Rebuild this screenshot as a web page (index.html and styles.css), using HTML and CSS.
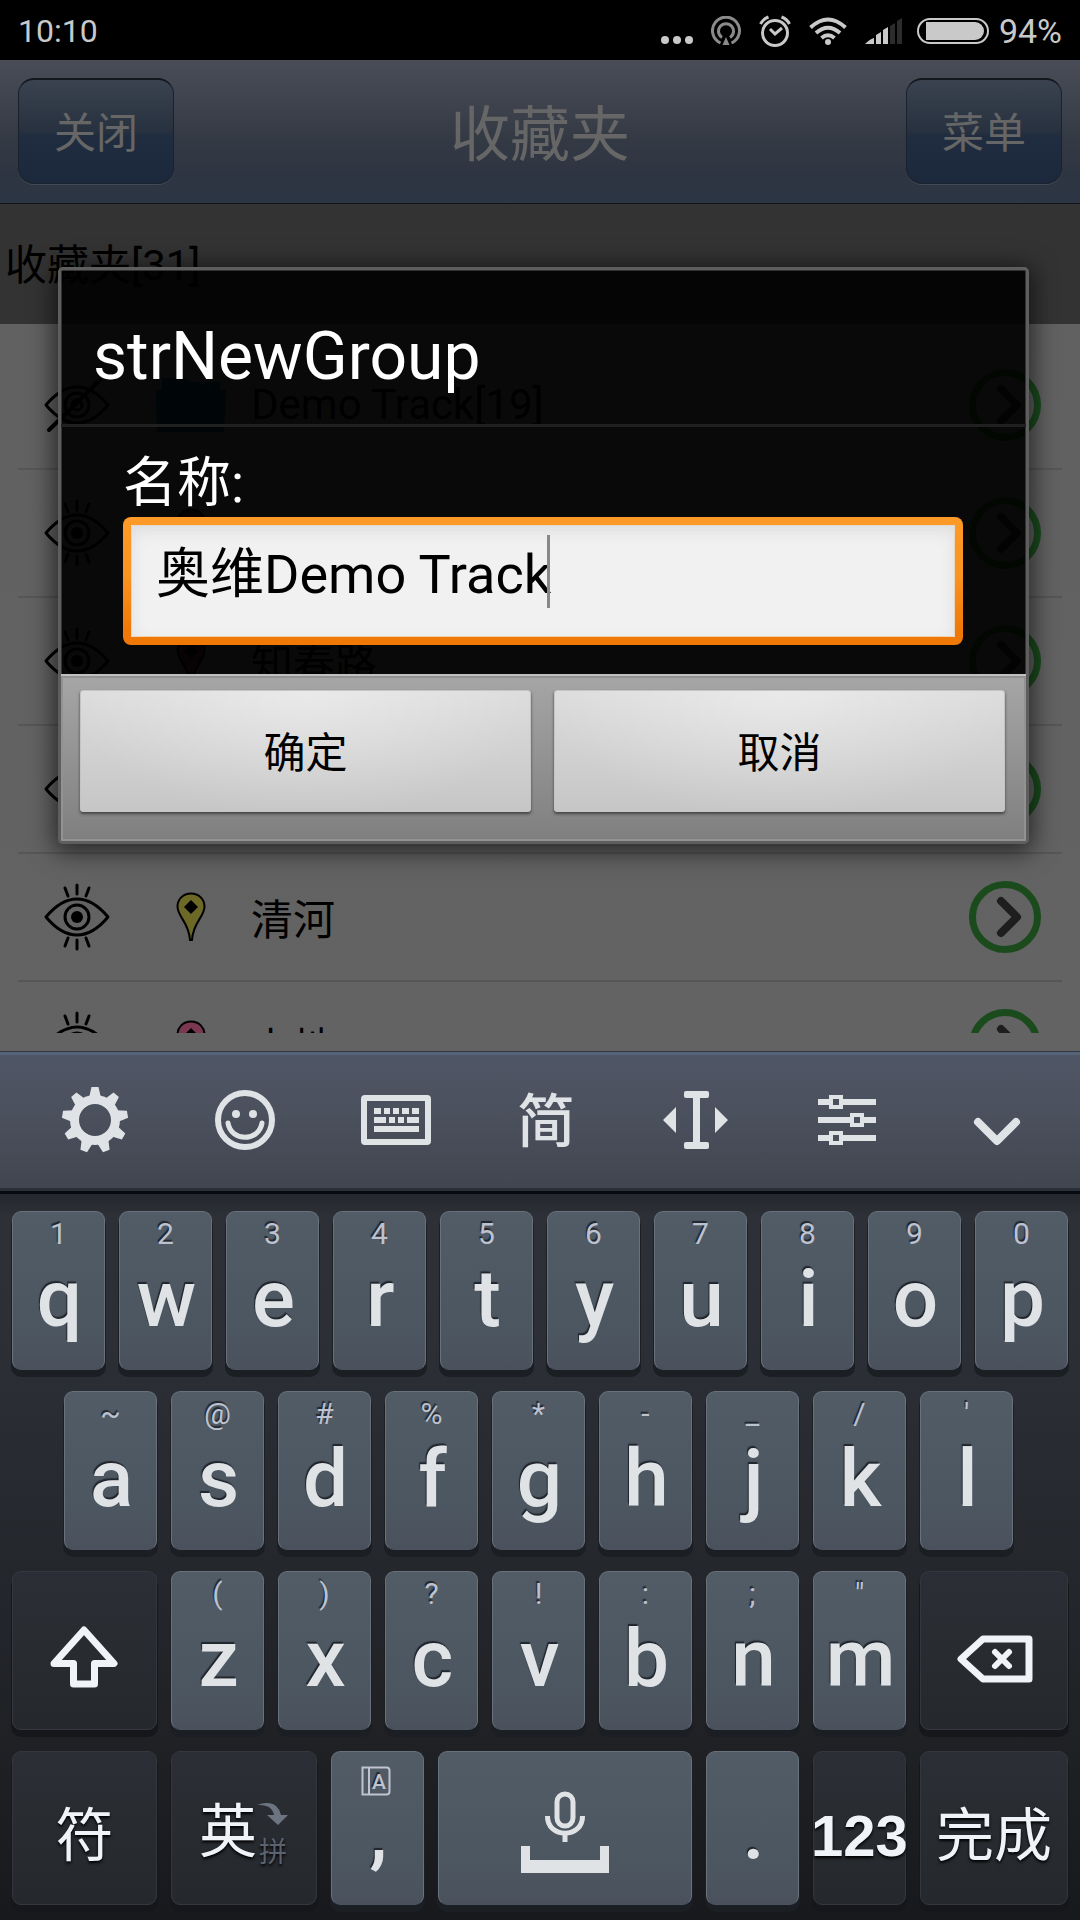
FILE: index.html
```html
<!DOCTYPE html>
<html lang="zh-CN">
<head>
<meta charset="utf-8">
<meta name="viewport" content="width=device-width, initial-scale=1">
<title>收藏夹</title>
<link rel="stylesheet" href="styles.css">
</head>
<body>
<svg class="defs" width="0" height="0" aria-hidden="true">
  <defs>
    <symbol id="eye" viewBox="0 0 66 68">
      <g fill="none" stroke="#000" stroke-width="3" stroke-linecap="round" stroke-linejoin="round">
        <path d="M2 34Q17 16 33 16T64 34Q49 52 33 52T2 34Z"/>
        <circle cx="33" cy="34" r="12"/>
        <path d="M33 2v9M21 5l3 8M45 5l-3 8M33 66v-9M21 63l3-8M45 63l-3-8"/>
      </g>
      <circle cx="33" cy="34" r="6"/>
    </symbol>
    <symbol id="eye-off" viewBox="0 0 66 68">
      <g fill="none" stroke="#000" stroke-width="3" stroke-linecap="round" stroke-linejoin="round">
        <path d="M2 34Q17 16 33 16T64 34Q49 52 33 52T2 34Z"/>
        <circle cx="33" cy="34" r="12"/><circle cx="33" cy="34" r="5"/>
        <path stroke-width="4" d="M5 59L56 9"/>
      </g>
    </symbol>
    <symbol id="pin" viewBox="0 0 30 50">
      <path stroke="#000" stroke-width="2" d="M15 1.500C7 1.500 1.500 7.500 1.500 14.500C1.500 25 13 30 14 48H16C17 30 28.500 25 28.500 14.500C28.500 7.500 23 1.500 15 1.500Z"/>
      <path fill="#000" d="M15 8l7 7-7 7-7-7z"/>
    </symbol>
    <symbol id="go" viewBox="0 0 72 72">
      <circle cx="36" cy="36" r="32.500" fill="none" stroke="#1b4b1d" stroke-width="7"/>
      <path d="M32 20L48 36L32 52" fill="none" stroke="#1e1e1e" stroke-width="8" stroke-linecap="round" stroke-linejoin="round"/>
    </symbol>
  </defs>
</svg>

<header class="status">
  <time>10:10</time>
  <div class="status-icons">
    <svg width="32" height="30" viewBox="0 0 32 30" fill="#c9c9c9"><circle cx="4" cy="24" r="4"/><circle cx="16" cy="24" r="4"/><circle cx="28" cy="24" r="4"/></svg>
    <svg width="30" height="30" viewBox="0 0 30 30" fill="none" stroke="#8a8a8a" stroke-width="3"><path d="M9.500 27A13.500 13.500 0 1 1 20.500 27M11 21.500A7.500 7.500 0 1 1 19 21.500"/><path d="M15 21l3.500 8h-7z" fill="#8a8a8a" stroke="none"/></svg>
    <svg width="32" height="32" viewBox="0 0 32 32" fill="none" stroke="#c9c9c9" stroke-width="3"><circle cx="16" cy="18" r="12.500"/><path d="M11 14l5 5 7-6M1.500 9Q4 4 9.500 2M30.500 9Q28 4 22.500 2"/></svg>
    <svg width="38" height="28" viewBox="0 0 38 28" fill="none" stroke="#c9c9c9" stroke-width="4"><path d="M1.500 10.500Q19-5.500 36.500 10.500M7 16Q19 5.500 31 16M12.500 21Q19 15.500 25.500 21"/><circle cx="19" cy="25" r="3" fill="#c9c9c9" stroke="none"/></svg>
    <svg width="37" height="26" viewBox="0 0 37 26"><path fill="#c9c9c9" d="M0 26Q5 21 9 20V26ZM11 26V17L16 14V26ZM18 26V12L23 9V26Z"/><path fill="#2c2c2c" d="M25 26V8L30 5V26ZM32 26V3L37 0V26Z"/></svg>
    <svg class="battery" width="72" height="26" viewBox="0 0 72 26"><rect x="1" y="1" width="70" height="24" rx="12" fill="none" stroke="#c9c9c9" stroke-width="2"/><path fill="#c9c9c9" d="M9 4H58A9 9 0 0 1 58 22H9Z"/></svg>
    <span class="percent">94%</span>
  </div>
</header>

<main class="app">
  <nav class="navbar">
    <button class="nav-button" type="button">关闭</button>
    <h1>收藏夹</h1>
    <button class="nav-button" type="button">菜单</button>
  </nav>
  <h2 class="section">收藏夹[31]</h2>
  <div class="list-frame">
    <ul class="list">
      <li><svg class="eye"><use href="#eye-off"/></svg>
        <svg class="marker folder" viewBox="0 0 70 54"><path fill="#02344a" d="M6 0H28L34 4H64V12H70L68 54H1L0 12H6Z"/></svg>
        <span>Demo Track[19]</span><svg class="go"><use href="#go"/></svg></li>
      <li><svg class="eye"><use href="#eye"/></svg><svg class="marker red"><use href="#pin"/></svg><span></span><svg class="go"><use href="#go"/></svg></li>
      <li><svg class="eye"><use href="#eye"/></svg><svg class="marker red"><use href="#pin"/></svg><span>知春路</span><svg class="go"><use href="#go"/></svg></li>
      <li><svg class="eye"><use href="#eye"/></svg><svg class="marker red"><use href="#pin"/></svg><span></span><svg class="go"><use href="#go"/></svg></li>
      <li><svg class="eye"><use href="#eye"/></svg><svg class="marker yellow"><use href="#pin"/></svg><span>清河</span><svg class="go"><use href="#go"/></svg></li>
      <li><svg class="eye"><use href="#eye"/></svg><svg class="marker pink"><use href="#pin"/></svg><span>上地</span><svg class="go"><use href="#go"/></svg></li>
    </ul>
  </div>

  <div class="overlay">
    <form class="dialog" role="dialog" aria-labelledby="dialog-title">
      <h2 id="dialog-title">strNewGroup</h2>
      <div class="dialog-body">
        <label for="name">名称:</label>
        <div class="field">
          <input id="name" type="text" value="奥维Demo Track">
          <i class="caret"></i>
        </div>
      </div>
      <div class="dialog-actions">
        <button type="button">确定</button>
        <button type="button">取消</button>
      </div>
    </form>
  </div>
</main>

<section class="keyboard" aria-label="键盘">
  <div class="toolbar">
    <button type="button" aria-label="设置"><svg width="68" height="68" viewBox="-34 -34 68 68" fill="#e0e3e6">
      <circle r="20.500" fill="none" stroke="#e0e3e6" stroke-width="9"/>
      <path id="tooth" d="M-6-22L-3.500-33H3.500L6-22Z"/>
      <use href="#tooth" transform="rotate(40)"/><use href="#tooth" transform="rotate(80)"/><use href="#tooth" transform="rotate(120)"/><use href="#tooth" transform="rotate(160)"/><use href="#tooth" transform="rotate(200)"/><use href="#tooth" transform="rotate(240)"/><use href="#tooth" transform="rotate(280)"/><use href="#tooth" transform="rotate(320)"/>
    </svg></button>
    <button type="button" aria-label="表情"><svg width="60" height="60" viewBox="0 0 60 60" fill="none" stroke="#e0e3e6"><circle cx="30" cy="30" r="27" stroke-width="6"/><path d="M13 33C16 52 44 52 47 33" stroke-width="5" stroke-linecap="round"/><circle cx="21" cy="24" r="4" fill="#e0e3e6" stroke="none"/><circle cx="38" cy="24" r="4" fill="#e0e3e6" stroke="none"/></svg></button>
    <button type="button" aria-label="键盘"><svg width="70" height="50" viewBox="0 0 70 50" fill="#e0e3e6"><rect x="3" y="3" width="64" height="44" rx="1" fill="none" stroke="#e0e3e6" stroke-width="6"/><path d="M13 13h7v6h-7zM23 13h6v6h-6zM32 13h6v6h-6zM41 13h7v6h-7zM51 13h7v6h-7zM13 22h12v6H13zM28 22h6v6h-6zM37 22h6v6h-6zM46 22h12v6H46zM13 31h45v6H13z"/></svg></button>
    <button type="button" class="jian">简</button>
    <button type="button" aria-label="光标"><svg width="66" height="58" viewBox="0 0 66 58" fill="#e0e3e6"><rect x="21" width="25" height="7" rx="2"/><rect x="21" y="51" width="25" height="7" rx="2"/><path d="M30 4h7v50h-7zM0 29L13 16V42ZM65 29L52 16V42Z"/></svg></button>
    <button type="button" aria-label="调整"><svg width="58" height="50" viewBox="0 0 58 50"><path stroke="#e0e3e6" stroke-width="6" d="M0 7H58M0 25H58M0 43H58"/><path stroke="#e0e3e6" stroke-width="4" fill="#4b505d" d="M13 2h10v10H13zM34 20h10v10H34zM13 38h10v10H13z"/></svg></button>
    <button type="button" class="hide" aria-label="收起"><svg width="48" height="32" viewBox="0 0 48 32" fill="none" stroke="#e0e3e6" stroke-width="8" stroke-linejoin="round" stroke-linecap="round"><path d="M5 6L24 25L43 6"/></svg></button>
  </div>

  <div class="keys">
    <div class="key-row">
      <button class="key"><small>1</small><b>q</b></button><button class="key"><small>2</small><b>w</b></button><button class="key"><small>3</small><b>e</b></button><button class="key"><small>4</small><b>r</b></button><button class="key"><small>5</small><b>t</b></button><button class="key"><small>6</small><b>y</b></button><button class="key"><small>7</small><b>u</b></button><button class="key"><small>8</small><b>i</b></button><button class="key"><small>9</small><b>o</b></button><button class="key"><small>0</small><b>p</b></button>
    </div>
    <div class="key-row inset">
      <button class="key"><small>~</small><b>a</b></button><button class="key"><small>@</small><b>s</b></button><button class="key"><small>#</small><b>d</b></button><button class="key"><small>%</small><b>f</b></button><button class="key"><small>*</small><b>g</b></button><button class="key"><small>-</small><b>h</b></button><button class="key"><small>_</small><b>j</b></button><button class="key"><small>/</small><b>k</b></button><button class="key"><small>'</small><b>l</b></button>
    </div>
    <div class="key-row">
      <button class="key dark wide shift" aria-label="上档"><svg width="68" height="62" viewBox="0 0 68 62" fill="none" stroke="#f0f3f8" stroke-width="7" stroke-linejoin="round"><path d="M34 4L64 37.500H44.500V58H23.500V37.500H4Z"/></svg></button>
      <button class="key"><small>(</small><b>z</b></button><button class="key"><small>)</small><b>x</b></button><button class="key"><small>?</small><b>c</b></button><button class="key"><small>!</small><b>v</b></button><button class="key"><small>:</small><b>b</b></button><button class="key"><small>;</small><b>n</b></button><button class="key"><small>"</small><b>m</b></button>
      <button class="key dark wider backspace" aria-label="退格"><svg width="77" height="48" viewBox="0 0 77 48" fill="none" stroke="#f0f3f8" stroke-width="7" stroke-linejoin="round"><path d="M27 4H73V44H27L5 24Z"/><path d="M39 17L53 31M53 17L39 31" stroke-width="6" stroke-linecap="round"/></svg></button>
    </div>
    <div class="key-row last">
      <button class="key dark wide han">符</button>
      <button class="key dark wide lang"><span class="current">英</span><span class="alt"><svg width="32" height="22" viewBox="0 0 32 22"><path fill="#6b7480" d="M0 2Q20-5 24 12H31L21 22L10 12H17Q15 1 0 2Z"/></svg>拼</span></button>
      <button class="key"><svg class="book" width="30" height="30" viewBox="0 0 30 30"><path d="M1.500 1.500H25.500Q28.500 1.500 28.500 4.500V25.500Q28.500 28.500 25.500 28.500H1.500ZM8 1.500V28.500" fill="none" stroke="#bfc4d0" stroke-width="2"/><text x="18" y="23" text-anchor="middle">A</text></svg><b>,</b></button>
      <button class="key space" aria-label="空格"><svg width="90" height="84" viewBox="0 0 90 84" fill="none" stroke="#e0e3e6"><rect x="37" y="3" width="16" height="32" rx="8" stroke-width="5"/><path d="M27.500 25C27 48 63 48 62.500 25M45 43V51" stroke-width="5"/><path d="M1 55H10V69H80V55H89V82H1Z" fill="#e0e3e6" stroke="none"/></svg></button>
      <button class="key"><b>.</b></button>
      <button class="key dark num">123</button>
      <button class="key dark wider han">完成</button>
    </div>
  </div>
</section>
</body>
</html>
```
FILE: styles.css
```css
* { box-sizing: border-box; }

body {
  margin: 0;
  min-height: 100vh;
  display: flex;
  flex-direction: column;
  background: #000;
  color: #000;
  font-family: Roboto, "Noto Sans CJK SC", sans-serif;
  font-size: 42px;
}

button, input {
  margin: 0;
  padding: 0;
  border: 0;
  background: none;
  font: inherit;
  color: inherit;
}

h1, h2, ul { margin: 0; padding: 0; font-weight: 400; }
svg { display: block; flex: none; }
.defs { position: absolute; }

/* Status bar */
.status {
  height: 60px;
  padding: 2px 18px 0;
  display: flex;
  align-items: center;
  justify-content: space-between;
  color: #c9c9c9;
  font-size: 32px;
}
.status-icons { display: flex; align-items: center; gap: 18px; }
.battery { margin-left: -3px; }
.percent { margin-left: -8px; font-size: 34px; }

/* Favourites screen */
.app {
  position: relative;
  flex: 1 1 0;
  min-height: 0;
  display: flex;
  flex-direction: column;
  background: linear-gradient(#606060, #636363);
  overflow: hidden;
}
.navbar {
  height: 144px;
  padding: 0 18px 1px;
  display: flex;
  align-items: center;
  justify-content: space-between;
  background: linear-gradient(#4a4d57, #343a44 55%, #2e3542 80%, #2c3644);
  border-bottom: 1px solid #101418;
  color: #666;
}
.navbar h1 { font-size: 60px; padding-bottom: 4px; }
.nav-button {
  width: 156px;
  height: 106px;
  padding-bottom: 4px;
  border: 1px solid #1a222d;
  border-top: 2px solid #14181e;
  border-radius: 16px;
  background: linear-gradient(#3a434f, #27313f 50%, #202d40 54%, #1c293d);
  box-shadow: 0 1px 0 #444a55;
}
.section {
  height: 120px;
  padding-left: 5px;
  background: #333;
  font-size: 42px;
  line-height: 124px;
}
.list-frame { flex: 1 1 0; min-height: 0; padding: 18px; display: flex; }
.list { flex: 1; overflow: hidden; list-style: none; }
.list li {
  height: 128px;
  padding: 0 21px 0 26px;
  display: flex;
  align-items: center;
  border-bottom: 2px solid #565656;
}
.eye { width: 66px; height: 68px; }
.marker { width: 30px; height: 50px; margin: 0 45px 0 66px; }
.folder { width: 70px; height: 54px; margin: 0 25px 0 46px; }
.red { fill: #4a1a20; }
.yellow { fill: #6c6826; }
.pink { fill: #7c3850; }
.list span { flex: 1; padding-bottom: 2px; }
.go { width: 72px; height: 72px; }

/* Dialog */
.overlay {
  position: absolute;
  inset: 0;
  padding: 0 51px 0 58px;
  display: flex;
  align-items: center;
}
.dialog {
  flex: 1;
  border: 3px solid #5e5e5e;
  border-radius: 5px;
  background: rgba(0, 0, 0, .9);
  box-shadow: 0 4px 24px 4px rgba(0, 0, 0, .6), inset 0 0 0 1px #333;
  color: #fff;
}
.dialog h2 {
  height: 157px;
  padding: 17px 32px 0;
  border-bottom: 3px solid #202020;
  font-size: 66px;
  line-height: 139px;
}
.dialog-body { padding: 24px 63px 29px 62px; }
.dialog-body label { display: block; font-size: 54px; line-height: 66px; }
.field {
  position: relative;
  padding: 8px;
  border-radius: 8px;
  background: linear-gradient(#fd9a28, #f99321 45%, #ef7807 90%);
}
.field input {
  display: block;
  width: 100%;
  height: 112px;
  padding: 0 25px 24px;
  background: #f1f1f1;
  box-shadow: inset 0 6px 16px #ddd, inset 0 0 0 1px #f7cf9d;
  font-size: 54px;
  color: #000;
}
.caret {
  position: absolute;
  left: 424px;
  top: 18px;
  width: 3px;
  height: 73px;
  background: #888;
}
.dialog-actions {
  padding: 14px 21px 29px 19px;
  display: flex;
  gap: 23px;
  border-top: 2px solid #c2bfc2;
  background: linear-gradient(#a6a6a6, #7f7f7f);
  box-shadow: inset 0 0 0 2px #929292;
}
.dialog-actions button {
  flex: 1;
  height: 122px;
  padding-bottom: 4px;
  border: 1px solid #c4c4c4;
  border-radius: 3px;
  background: radial-gradient(ellipse at 50% 0, rgba(255, 255, 255, .4), transparent 75%), linear-gradient(#dcdcdc, #c6c6c6);
  box-shadow: 0 2px 3px #444;
  color: #000;
}

/* Keyboard */
.keyboard { border-top: 1px solid #30363e; }
.toolbar {
  height: 142px;
  padding: 0 8px 6px 20px;
  display: flex;
  background: linear-gradient(#4f5665, #4b505d 45%, #40454f);
  border-top: 3px solid #56647a;
  border-bottom: 3px solid #070a0e;
  box-shadow: inset 0 -3px 0 #2a3037;
}
.toolbar button {
  flex: 1;
  display: flex;
  align-items: center;
  justify-content: center;
  color: #e0e3e6;
}
.toolbar .jian { padding-bottom: 6px; font-size: 58px; font-weight: 500; }
.toolbar .hide { padding-top: 24px; }
.keys {
  padding: 17px 12px 15px;
  display: flex;
  flex-direction: column;
  gap: 21px;
  background: linear-gradient(#24272c, #2d3036 3%, #2c2f36 20%, #1f2125 75%, #17191d);
}
.key-row { height: 159px; display: flex; gap: 14px; }
.inset { padding: 0 55px 0 52px; }
.last { height: 154px; }
.key {
  position: relative;
  flex: 93 1 93px;
  min-width: 0;
  display: flex;
  flex-direction: column;
  align-items: center;
  border: 1px solid #68717c;
  border-bottom-color: #4b535f;
  border-radius: 9px;
  background: linear-gradient(#525c67, #4c5660 75%, #4a515d);
  box-shadow: 0 6px 0 1px #1b1e22;
  color: #e0e3e6;
  text-shadow: -1px -2px 1px #20252c;
}
.key small {
  height: 44px;
  font-size: 30px;
  line-height: 44px;
  font-weight: 400;
  color: #bcc2cf;
}
.key b { padding-left: 2px; font-size: 80px; font-weight: 500; line-height: 86px; }
.last .key { justify-content: flex-end; }
.last .key b { padding-bottom: 38px; line-height: 68px; }
.key.dark {
  justify-content: center;
  border-color: #34383e;
  background: linear-gradient(#2b2e36, #292c31 35%, #25282c);
  box-shadow: 0 6px 0 1px #15171a;
  color: #f0f3f8;
  text-shadow: 0 2px 3px #000;
}
.key.wide { flex: 145 1 145px; padding-top: 12px; }
.key.wider { flex: 148 1 148px; padding-top: 12px; }
.key.shift { padding: 12px 2px 0 0; }
.key.backspace { padding: 16px 0 0; }
.key.space { flex: 254 1 254px; padding-bottom: 29px; }
.key.han { padding-top: 6px; font-size: 58px; }
.key.num { font-family: "Liberation Sans", sans-serif; font-size: 58px; font-weight: 700; padding-top: 14px; }
.key.lang { flex: 146 1 146px; flex-direction: row; align-items: center; font-size: 58px; }
.key .current { padding-bottom: 14px; }
.key .alt {
  display: flex;
  flex-direction: column;
  align-items: center;
  gap: 10px;
  padding-top: 6px;
  font-size: 28px;
  line-height: 36px;
  color: #5a636f;
}
.book { margin: 0 4px 2px 0; }
.book text { fill: #bfc4d0; font-size: 21px; font-weight: 500; }
```
